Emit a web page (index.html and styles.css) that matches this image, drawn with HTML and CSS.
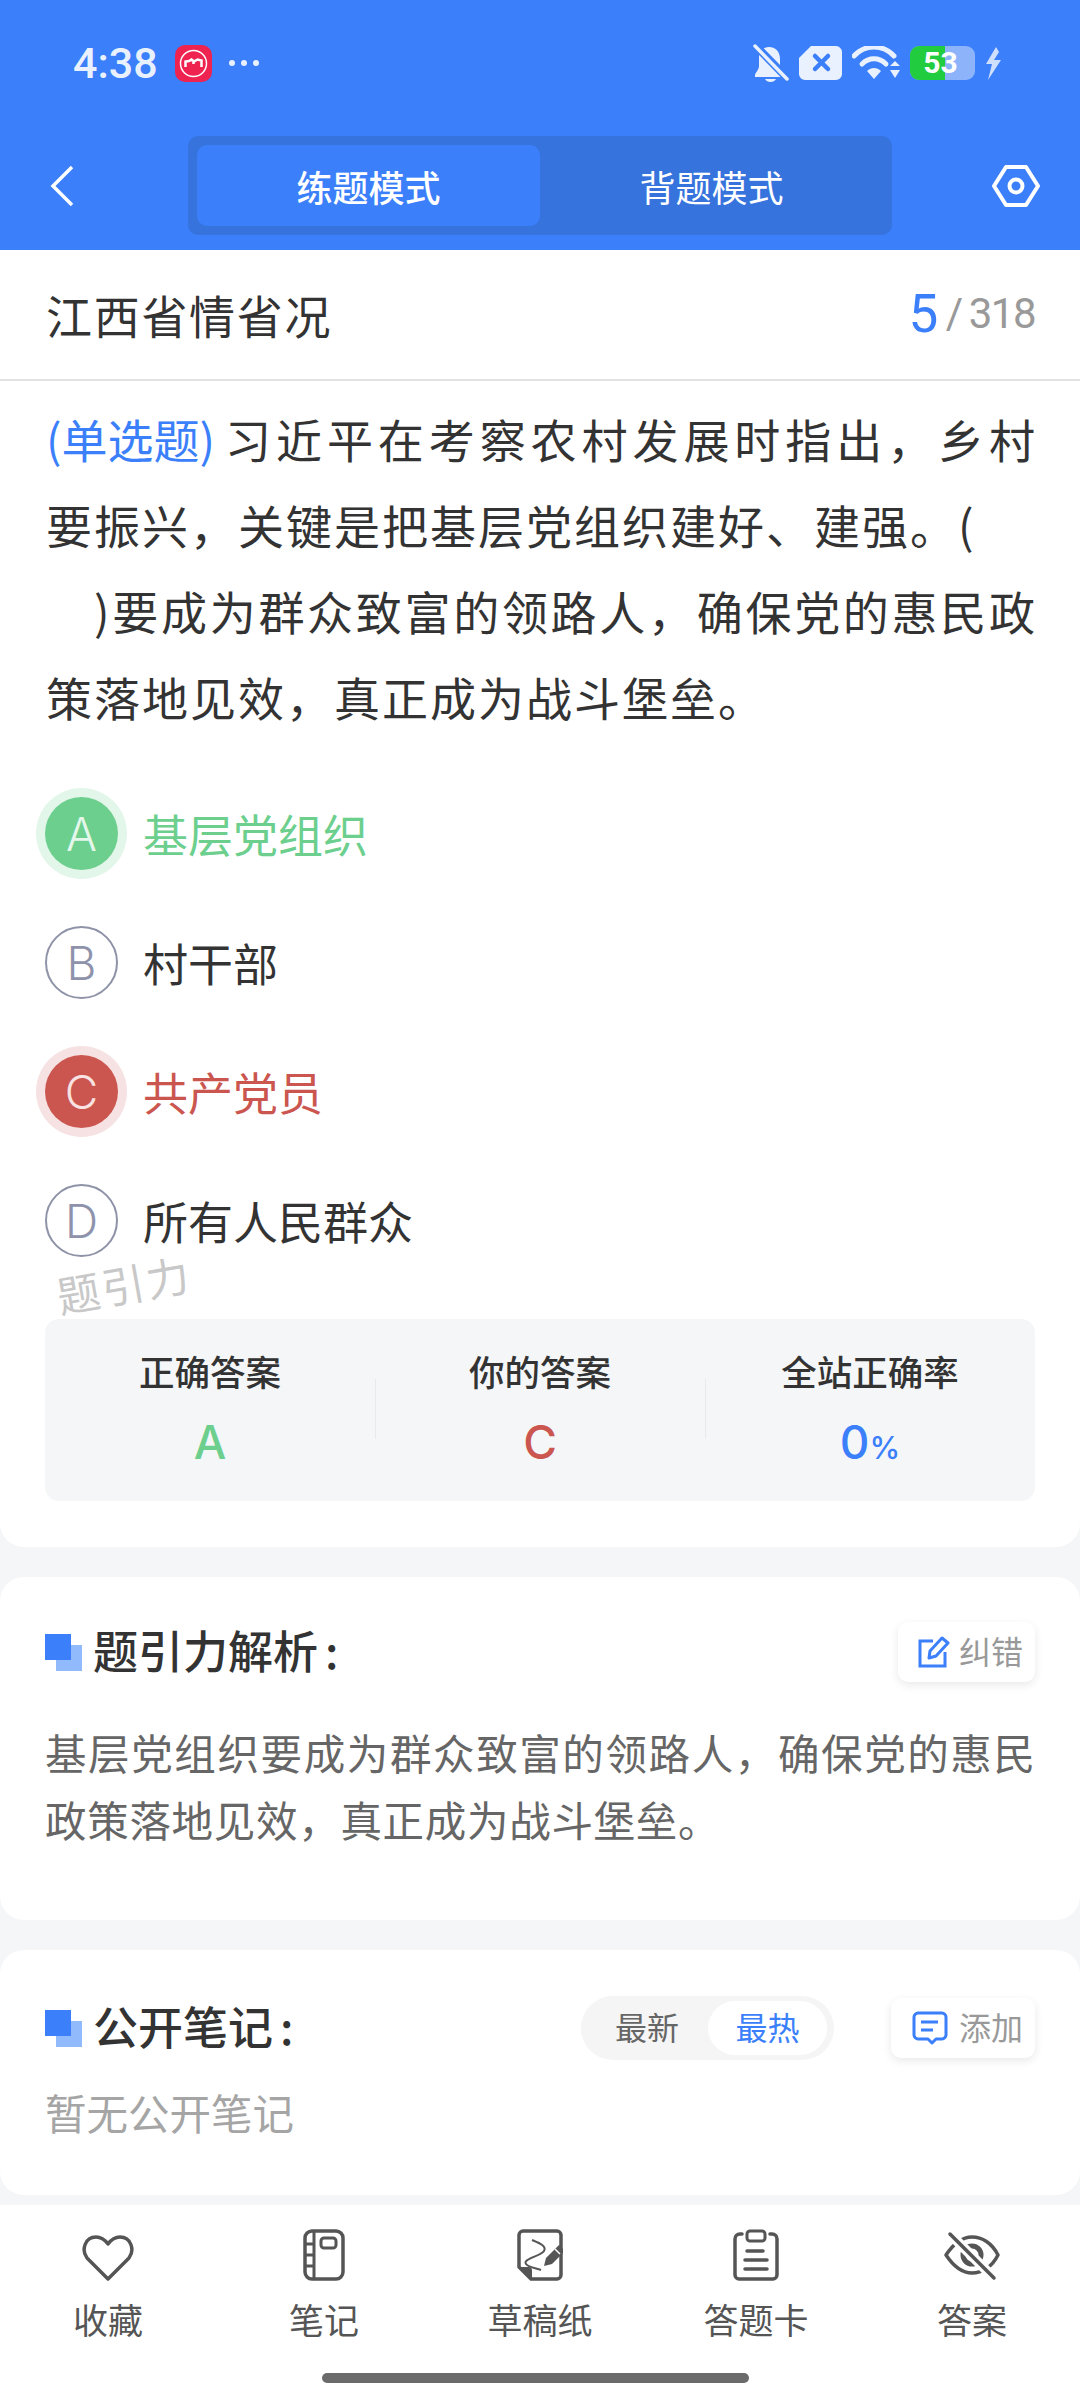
FILE: index.html
```html
<!DOCTYPE html>
<html lang="zh-CN">
<head>
    <meta charset="UTF-8">
    <meta name="viewport" content="width=device-width, initial-scale=1.0">
    <title>练题模式</title>
    <link rel="stylesheet" href="styles.css">
</head>
<body>
    <header class="header">
        <div class="status">
            <span class="time">4:38</span>
            <svg class="app-icon" width="37" height="37" viewBox="0 0 37 37">
                <rect width="37" height="37" rx="10" fill="#ee2350"/>
                <circle cx="18.5" cy="18.5" r="13" fill="none" stroke="#fff" stroke-width="1.5"/>
                <path d="M10.500 22v-5.500l3.500-.5 2.500-1.500 2.500 2 3.500-2 4 1V22M18.500 17v2" fill="none" stroke="#fff" stroke-width="2.500"/>
            </svg>
            <span class="dots"><i></i><i></i><i></i></span>
            <div class="status-right">
                <svg width="36" height="39" viewBox="0 0 36 39">
                    <path d="M16 3c6 0 11 4 11 12v8l5 8v2H2v-2c0-2 4-5 4-9v-9c0-6 4-10 10-10z" fill="#eaf1fe"/>
                    <path d="M12 35h11c-1 2-3 3-5.500 3S13 37 12 35z" fill="#eaf1fe"/>
                    <path d="M2 1l33 34" stroke="#3b7ffa" stroke-width="8"/>
                    <path d="M2 2l32 33" stroke="#eaf1fe" stroke-width="3.500" stroke-linecap="round"/>
                </svg>
                <svg width="43" height="34" viewBox="0 0 43 34">
                    <path d="M12 0h25c3 0 6 3 6 6v22c0 3-3 6-6 6H6c-3 0-6-3-6-6V12z" fill="#eaf1fe"/>
                    <path d="M16 10l13 13M29 10L16 23" stroke="#3b7ffa" stroke-width="4.500" stroke-linecap="round"/>
                </svg>
                <svg width="48" height="34" viewBox="0 0 48 34">
                    <path d="M2 10c11-12 29-12 40 0" fill="none" stroke="#eaf1fe" stroke-width="5" stroke-linecap="round"/>
                    <path d="M10 18c7-7 17-7 24 0" fill="none" stroke="#eaf1fe" stroke-width="5" stroke-linecap="round"/>
                    <path d="M15 25c4-4 10-4 14 0l-7 8z" fill="#eaf1fe"/>
                    <path d="M38 20l5-5 5 5zM38 24l5 8 5-8z" fill="#eaf1fe"/>
                </svg>
                <div class="battery"><span class="battery-fill"></span><span class="battery-num">53</span></div>
                <svg width="16" height="33" viewBox="0 0 16 33">
                    <path d="M11 0L1 17h6L3 33l13-20H9l5-8z" fill="#eaf1fe" opacity=".85"/>
                </svg>
            </div>
        </div>
        <nav class="nav">
            <svg class="nav-back" width="24" height="42" viewBox="0 0 24 42">
                <path d="M22 2L3 21l19 19" fill="none" stroke="#fff" stroke-width="3.500"/>
            </svg>
            <div class="tabs">
                <div class="tab tab-active">练题模式</div>
                <div class="tab">背题模式</div>
            </div>
            <svg class="nav-set" width="48" height="44" viewBox="0 0 48 44">
                <path d="M14 3h20l12 19-12 19H14L2 22z" fill="none" stroke="#fff" stroke-width="4" stroke-linejoin="round"/>
                <circle cx="24" cy="22" r="6.500" fill="none" stroke="#fff" stroke-width="4"/>
            </svg>
        </nav>
    </header>

    <section class="card card-main">
        <div class="title-row">
            <span class="title">江西省情省况</span>
            <span class="count"><b>5</b><em>/</em>318</span>
        </div>
        <div class="question">
            <span class="line line-fill"><span class="q-type blue">(单选题)</span>习近平在考察农村发展时指出，乡村</span>
            <span class="line">要振兴，关键是把基层党组织建好、建强。(</span>
            <span class="line line-fill line-indent">)要成为群众致富的领路人，确保党的惠民政</span>
            <span class="line">策落地见效，真正成为战斗堡垒。</span>
        </div>
        <ul class="options">
            <li class="option option-right"><span class="badge">A</span>基层党组织</li>
            <li class="option"><span class="badge">B</span>村干部</li>
            <li class="option option-wrong"><span class="badge">C</span>共产党员</li>
            <li class="option"><span class="badge">D</span>所有人民群众</li>
        </ul>
        <div class="watermark">题引力</div>
        <div class="stats">
            <div class="stat">
                <div class="stat-label">正确答案</div>
                <div class="stat-value green">A</div>
            </div>
            <div class="stat">
                <div class="stat-label">你的答案</div>
                <div class="stat-value red">C</div>
            </div>
            <div class="stat">
                <div class="stat-label">全站正确率</div>
                <div class="stat-value blue">0<small>%</small></div>
            </div>
        </div>
    </section>

    <section class="card card-note">
        <div class="sec-head">
            <span class="sec-mark"></span>
            <h2 class="sec-title">题引力解析<i>:</i></h2>
            <div class="mini-btn">
                <svg width="32" height="32" viewBox="0 0 32 32">
                    <path d="M15 5H2v25h25V16" fill="none" stroke="#3b7ffa" stroke-width="3"/>
                    <path d="M12 15L24 2l6 5-12 13-7 2z" fill="none" stroke="#3b7ffa" stroke-width="3" stroke-linejoin="round"/>
                </svg>
                <span>纠错</span>
            </div>
        </div>
        <p class="analysis">
            <span class="line line-fill">基层党组织要成为群众致富的领路人，确保党的惠民</span>
            <span class="line">政策落地见效，真正成为战斗堡垒。</span>
        </p>
    </section>

    <section class="card card-public">
        <div class="sec-head sec-head-tall">
            <span class="sec-mark"></span>
            <h2 class="sec-title">公开笔记<i>:</i></h2>
            <div class="switch">
                <span class="switch-item">最新</span>
                <span class="switch-item switch-on">最热</span>
            </div>
            <div class="mini-btn mini-btn-add">
                <svg width="36" height="34" viewBox="0 0 36 34">
                    <path d="M6 2h24c2 0 4 2 4 4v18c0 2-2 4-4 4h-6l-4 4-4-4H6c-2 0-4-2-4-4V6c0-2 2-4 4-4z" fill="none" stroke="#3b7ffa" stroke-width="3" stroke-linejoin="round"/>
                    <path d="M9 11h17M9 19h12" stroke="#3b7ffa" stroke-width="3"/>
                </svg>
                <span>添加</span>
            </div>
        </div>
        <p class="empty">暂无公开笔记</p>
    </section>

    <footer class="bar">
        <div class="bar-items">
            <div class="bar-item">
                <svg width="52" height="52" viewBox="0 0 52 52">
                    <path d="M26 50L5 29C-1 21 3 8 14 8c5 0 9 3 12 7 3-4 7-7 12-7 11 0 15 13 9 21z" fill="none" stroke="#555" stroke-width="3.500" stroke-linejoin="round"/>
                </svg>
                <span>收藏</span>
            </div>
            <div class="bar-item">
                <svg width="42" height="52" viewBox="0 0 42 52">
                    <rect x="2" y="2" width="38" height="48" rx="7" fill="none" stroke="#555" stroke-width="3.500"/>
                    <path d="M11 2v48M2 15h9M2 26h9M2 37h9" stroke="#555" stroke-width="3"/>
                    <rect x="18" y="9" width="15" height="10" rx="3" fill="none" stroke="#555" stroke-width="3"/>
                </svg>
                <span>笔记</span>
            </div>
            <div class="bar-item">
                <svg width="46" height="52" viewBox="0 0 46 52">
                    <path d="M6 2h34c2 0 4 2 4 4v40c0 2-2 4-4 4H14L2 38V6c0-2 2-4 4-4z" fill="none" stroke="#555" stroke-width="3.500" stroke-linejoin="round"/>
                    <path d="M2 38h9c3 0 4 1 4 4v8z" fill="#555"/>
                    <path d="M15 11C22 14 30 17 27 22C24 27 5 30 9 35C11 38 18 39 24 41" fill="none" stroke="#555" stroke-width="2"/>
                    <path d="M27 37l2-8 13-13 6 6-13 13z" fill="#555"/>
                    <path d="M38 20l5 5" stroke="#fff" stroke-width="1.500"/>
                </svg>
                <span>草稿纸</span>
            </div>
            <div class="bar-item">
                <svg width="46" height="52" viewBox="0 0 46 52">
                    <path d="M9 5H7C4 5 2 7 2 10v36c0 2 2 4 4 4h34c2 0 4-2 4-4V10c0-3-2-5-5-5h-2" fill="none" stroke="#555" stroke-width="3.500" stroke-linecap="round"/>
                    <rect x="14" y="2" width="18" height="10" rx="3" fill="none" stroke="#555" stroke-width="3"/>
                    <path d="M14 22h16M12 31h22M12 40h22" stroke="#555" stroke-width="3.500" stroke-linecap="round"/>
                </svg>
                <span>答题卡</span>
            </div>
            <div class="bar-item">
                <svg width="56" height="52" viewBox="0 0 56 52">
                    <path d="M2 26C10 14 18 8 28 8C38 8 48 14 54 26C48 38 38 44 28 44C18 44 10 38 2 26z" fill="none" stroke="#555" stroke-width="3.500" stroke-linejoin="round"/>
                    <circle cx="28" cy="26" r="9" fill="none" stroke="#555" stroke-width="5"/>
                    <path d="M6 5l44 44" stroke="#fff" stroke-width="10"/>
                    <path d="M6 5l44 44" stroke="#555" stroke-width="3.500" stroke-linecap="round"/>
                </svg>
                <span>答案</span>
            </div>
        </div>
        <div class="home-line"></div>
    </footer>
</body>
</html>
```

FILE: styles.css
```css
* {
    box-sizing: border-box;
}
body {
    margin: 0;
    width: 1080px;
    height: 2400px;
    overflow: hidden;
    background: #f4f6f8;
    font-family: "Noto Sans CJK SC", "Noto Sans", sans-serif;
    color: #333;
}
.blue {
    color: #3b7ffa;
}
.green {
    color: #6ccf8e;
}
.red {
    color: #cb5650;
}

/* top */
.header {
    height: 250px;
    background: #3b7ffa;
}
.status {
    height: 126px;
    display: flex;
    align-items: center;
    padding: 0 79px 0 73px;
}
.time {
    font-family: Roboto, sans-serif;
    font-size: 43px;
    font-weight: 500;
    color: #eaf1fe;
}
.app-icon {
    margin-left: 17px;
}
.dots {
    display: flex;
    gap: 6px;
    margin-left: 17px;
}
.dots i {
    width: 6px;
    height: 6px;
    border-radius: 50%;
    background: #eaf1fe;
}
.status-right {
    margin-left: auto;
    display: flex;
    align-items: center;
    gap: 10px;
}
.battery {
    position: relative;
    width: 65px;
    height: 34px;
    border-radius: 9px;
    background: #8db4fb;
    display: flex;
    align-items: center;
    justify-content: center;
}
.battery-fill {
    position: absolute;
    left: 0;
    top: 0;
    bottom: 0;
    width: 35px;
    border-radius: 9px 0 0 9px;
    background: #22cc3f;
}
.battery-num {
    position: relative;
    font-family: Roboto, sans-serif;
    font-size: 30px;
    line-height: 34px;
    font-weight: 700;
    color: #fff;
    margin-right: 4px;
}
.nav {
    display: flex;
    align-items: center;
    height: 99px;
    margin-top: 10px;
    padding-left: 50px;
}
.tabs {
    width: 704px;
    height: 99px;
    margin-left: 114px;
    padding: 9px;
    display: flex;
    background: #3673dd;
    border-radius: 10px;
}
.tab {
    flex: 1;
    height: 81px;
    display: flex;
    align-items: center;
    justify-content: center;
    font-size: 36px;
    color: #fff;
    border-radius: 10px;
}
.tab-active {
    background: #3b7ffa;
    font-weight: 500;
}
.nav-set {
    margin-left: 100px;
}

/* cards */
.card {
    background: #fff;
    border-radius: 24px;
    margin-bottom: 30px;
}
.card-main {
    position: relative;
    height: 1297px;
    border-radius: 0 0 24px 24px;
}
.card-note {
    height: 343px;
    padding: 45px 45px 0;
}
.card-public {
    height: 245px;
    margin-bottom: 10px;
    padding: 46px 45px 0;
}
.title-row {
    height: 131px;
    display: flex;
    align-items: center;
    justify-content: space-between;
    padding: 0 45px 2px 46px;
    border-bottom: 2px solid #e2e2e2;
}
.title {
    font-size: 46px;
    letter-spacing: 1.700px;
}
.count {
    font-family: Roboto, sans-serif;
    font-size: 42px;
    letter-spacing: -1.500px;
    color: #999;
    display: flex;
    align-items: center;
}
.count b {
    font-size: 53px;
    font-weight: 400;
    color: #3b7ffa;
}
.count em {
    font-style: normal;
    margin: 0 7px 0 9px;
}
.question {
    padding: 14px 45px 0 46px;
    font-size: 46px;
    letter-spacing: 2px;
}
.q-type {
    display: inline-block;
    letter-spacing: 0;
    margin-right: 5px;
}
.line {
    display: block;
    line-height: 86px;
}
.line-fill {
    text-align: justify;
    text-align-last: justify;
    letter-spacing: 0;
}
.line-indent {
    padding-left: 48px;
}
.options {
    list-style: none;
    margin: 30px 0 0;
    padding: 0 0 0 45px;
}
.option {
    height: 129px;
    display: flex;
    align-items: center;
    font-size: 45px;
    color: #333;
}
.badge {
    width: 73px;
    height: 73px;
    margin-right: 25px;
    border-radius: 50%;
    border: 2px solid #8f93a8;
    display: flex;
    align-items: center;
    justify-content: center;
    font-family: Inter, "Noto Sans", sans-serif;
    font-size: 46px;
    font-weight: 300;
    line-height: 1;
    color: #8e92ab;
}
.option-right {
    color: #6ccf8e;
}
.option-right .badge {
    background: #6ccf8e;
    border: 0;
    color: #e3f7ea;
    box-shadow: 0 0 0 9px #e2f6ea;
}
.option-wrong {
    color: #cb5650;
}
.option-wrong .badge {
    background: #cb5650;
    border: 0;
    color: #f8e3e2;
    box-shadow: 0 0 0 9px #f6e2e2;
}
.watermark {
    position: absolute;
    left: 56px;
    top: 1005px;
    font-size: 43px;
    line-height: 56px;
    letter-spacing: 2px;
    color: #c8c8c8;
    transform: rotate(-10deg);
}
.stats {
    margin: 34px 45px 0;
    height: 182px;
    display: flex;
    background: #f4f6f8;
    border-radius: 14px;
}
.stat {
    flex: 1;
    position: relative;
    text-align: center;
    padding-top: 28px;
}
.stat + .stat::before {
    content: "";
    position: absolute;
    left: 0;
    top: 60px;
    height: 60px;
    width: 1px;
    background: #e8eaee;
}
.stat-label {
    font-size: 35.500px;
    line-height: 48px;
    font-weight: 500;
    color: #333;
}
.stat-value {
    margin-top: 22px;
    font-family: Inter, "Noto Sans", sans-serif;
    font-size: 46px;
    line-height: 50px;
    font-weight: 500;
}
.stat-value small {
    font-size: 31px;
}

/* section heads */
.sec-head {
    height: 60px;
    display: flex;
    align-items: center;
}
.sec-head-tall {
    height: 64px;
}
.sec-mark {
    width: 37px;
    height: 37px;
    flex: none;
    background: linear-gradient(#3b7ffa, #3b7ffa) 0 0 / 26px 26px no-repeat,
        linear-gradient(#90bafc, #90bafc) 11px 11px / 26px 26px no-repeat;
}
.sec-title {
    margin: 0 0 0 11px;
    padding-bottom: 5px;
    font-size: 45px;
    font-weight: 500;
    color: #333;
}
.sec-title i {
    font-style: normal;
    margin-left: 7px;
}
.mini-btn {
    margin-left: auto;
    height: 60px;
    padding: 0 12px 0 20px;
    display: flex;
    align-items: center;
    gap: 9px;
    background: #fff;
    border-radius: 10px;
    box-shadow: 0 3px 10px rgba(0, 0, 0, 0.09);
    font-size: 32px;
    color: #999;
}
.mini-btn span {
    padding-bottom: 4px;
}
.mini-btn-add {
    padding-left: 21px;
    gap: 11px;
}
.switch {
    margin-left: auto;
    width: 253px;
    height: 64px;
    padding: 5px 7px 5px 5px;
    display: flex;
    background: #f5f5f5;
    border-radius: 32px;
}
.switch-item {
    flex: 1;
    display: flex;
    align-items: center;
    justify-content: center;
    padding-bottom: 4px;
    font-size: 32px;
    color: #666;
    border-radius: 27px;
}
.switch-on {
    flex: none;
    width: 119px;
    background: #fff;
    color: #3b7ffa;
}
.switch + .mini-btn {
    margin-left: 57px;
}
.analysis {
    margin: 37px 0 0;
    font-size: 41.500px;
    color: #666;
    letter-spacing: 0.700px;
}
.analysis .line {
    line-height: 67px;
}
.analysis .line-fill {
    letter-spacing: 0;
}
.empty {
    margin: 22px 0 0;
    font-size: 41.500px;
    line-height: 60px;
    color: #a5a5a5;
}

/* bottom */
.bar {
    height: 195px;
    background: #fff;
    padding-top: 24px;
}
.bar-items {
    display: flex;
}
.bar-item {
    flex: 1;
    display: flex;
    flex-direction: column;
    align-items: center;
    font-size: 35px;
    line-height: 46px;
    color: #555;
}
.bar-item span {
    margin-top: 15px;
}
.home-line {
    width: 427px;
    height: 10px;
    margin: 31px 0 0 322px;
    border-radius: 5px;
    background: #6b6b6b;
}
```
